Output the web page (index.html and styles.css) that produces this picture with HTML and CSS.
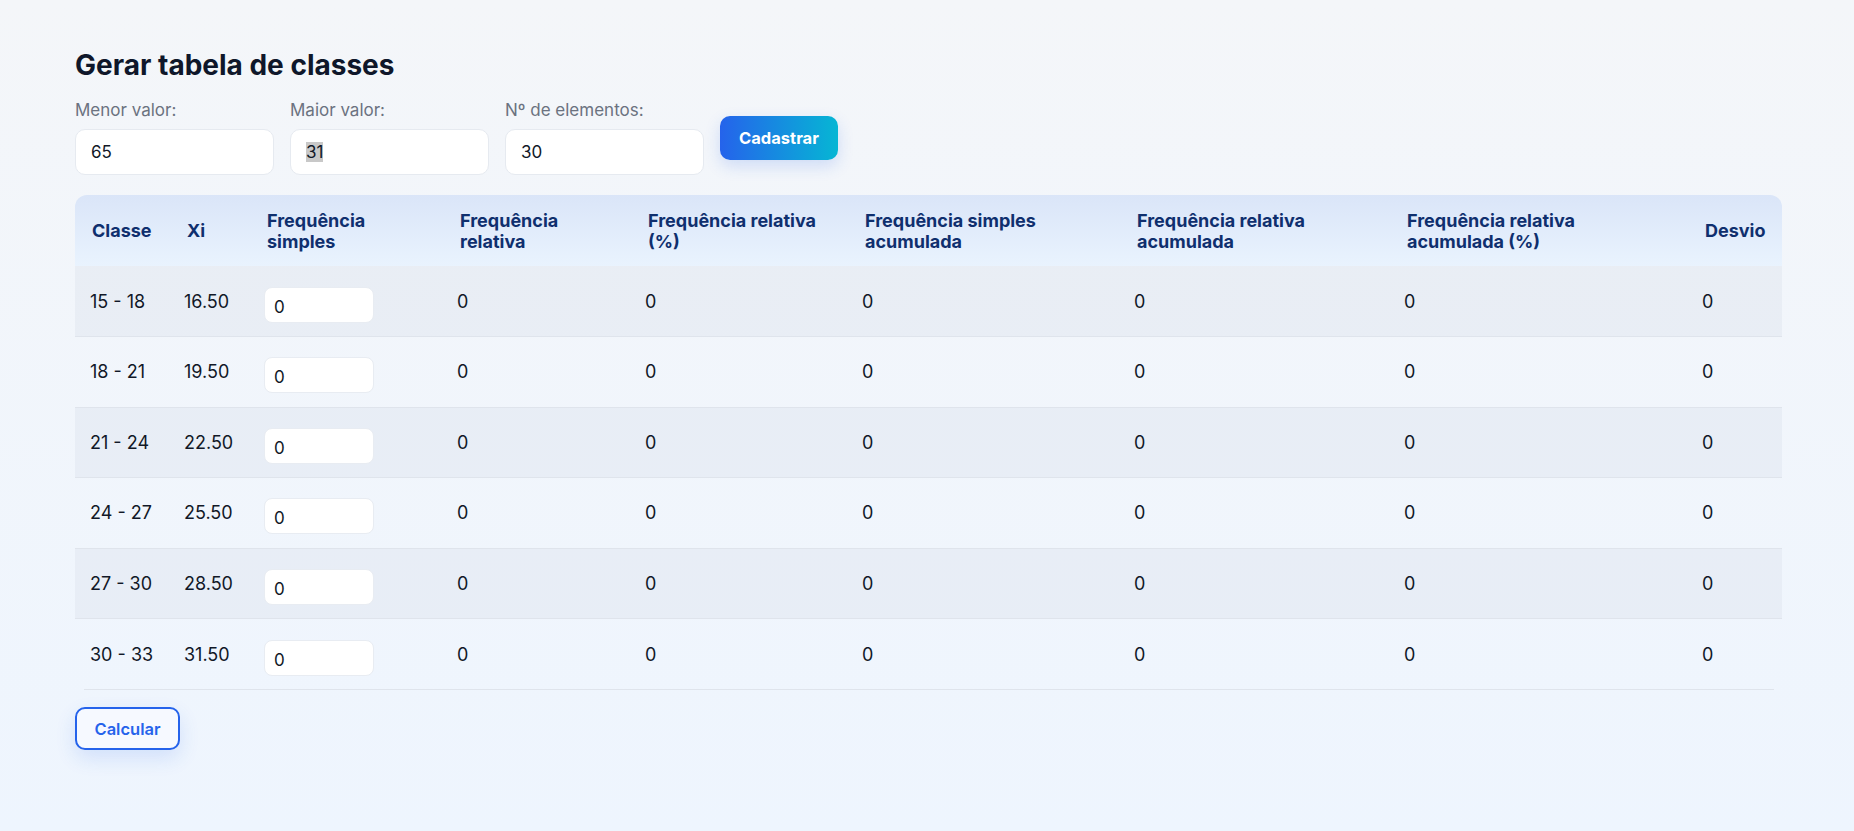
FILE: index.html
```html
<!DOCTYPE html>
<html lang="pt-BR">
<head>
<meta charset="utf-8">
<title>Gerar tabela de classes</title>
<link rel="stylesheet" href="styles.css">
</head>
<body>
<main class="page">
  <h1 class="title">Gerar tabela de classes</h1>
  <form class="form" onsubmit="return false">
    <div class="field">
      <label class="label">Menor valor:</label>
      <input class="input" type="text" value="65">
    </div>
    <div class="field">
      <label class="label">Maior valor:</label>
      <input class="input input-selected" id="maior" type="text" value="31">
    </div>
    <div class="field">
      <label class="label">Nº de elementos:</label>
      <input class="input" type="text" value="30">
    </div>
    <button class="btn-primary" type="button">Cadastrar</button>
  </form>

  <div class="table-wrap">
    <table class="table">
      <colgroup>
        <col class="c1"><col class="c2"><col class="c3"><col class="c4"><col class="c5"><col class="c6"><col class="c7"><col class="c8"><col class="c9">
      </colgroup>
      <thead>
        <tr>
          <th>Classe</th>
          <th>Xi</th>
          <th>Frequência<br>simples</th>
          <th>Frequência<br>relativa</th>
          <th>Frequência relativa<br>(%)</th>
          <th>Frequência simples<br>acumulada</th>
          <th>Frequência relativa<br>acumulada</th>
          <th>Frequência relativa<br>acumulada (%)</th>
          <th>Desvio</th>
        </tr>
      </thead>
      <tbody>
        <tr><td>15 - 18</td><td>16.50</td><td class="td-input"><input class="cell-input" type="text" value="0"></td><td>0</td><td>0</td><td>0</td><td>0</td><td>0</td><td>0</td></tr>
        <tr><td>18 - 21</td><td>19.50</td><td class="td-input"><input class="cell-input" type="text" value="0"></td><td>0</td><td>0</td><td>0</td><td>0</td><td>0</td><td>0</td></tr>
        <tr><td>21 - 24</td><td>22.50</td><td class="td-input"><input class="cell-input" type="text" value="0"></td><td>0</td><td>0</td><td>0</td><td>0</td><td>0</td><td>0</td></tr>
        <tr><td>24 - 27</td><td>25.50</td><td class="td-input"><input class="cell-input" type="text" value="0"></td><td>0</td><td>0</td><td>0</td><td>0</td><td>0</td><td>0</td></tr>
        <tr><td>27 - 30</td><td>28.50</td><td class="td-input"><input class="cell-input" type="text" value="0"></td><td>0</td><td>0</td><td>0</td><td>0</td><td>0</td><td>0</td></tr>
        <tr><td>30 - 33</td><td>31.50</td><td class="td-input"><input class="cell-input" type="text" value="0"></td><td>0</td><td>0</td><td>0</td><td>0</td><td>0</td><td>0</td></tr>
      </tbody>
    </table>
  </div>
  <div class="divider"></div>

  <button class="btn-outline" type="button">Calcular</button>
</main>
<script src="script.js"></script>
</body>
</html>
```

FILE: styles.css
```css
* { box-sizing: border-box; }

html, body {
  margin: 0;
  min-height: 100%;
}

body {
  min-height: 100vh;
  font-family: Inter, "Noto Sans", "Liberation Sans", sans-serif;
  background: linear-gradient(180deg, #f4f6f9 0%, #eef5fe 100%);
  color: #111827;
}

.page {
  padding: 48px 72px 40px 75px;
}

.title {
  margin: 0 0 18px;
  font-size: 28px;
  line-height: 34px;
  font-weight: 700;
  color: #0f172a;
}

.form {
  display: flex;
  align-items: center;
  gap: 16px;
}

.field {
  display: flex;
  flex-direction: column;
  gap: 9px;
  width: 199px;
}

.label {
  font-size: 17px;
  line-height: 20px;
  color: #6b7280;
}

.input {
  height: 46px;
  width: 100%;
  padding: 0 15px;
  border: 1px solid #e6eaf0;
  border-radius: 10px;
  background: #ffffff;
  font-family: inherit;
  font-size: 17px;
  color: #111827;
  outline: none;
}

.input-selected::selection {
  background: #c8c8c8;
  color: #111827;
}

.btn-primary {
  width: 118px;
  height: 44px;
  border: none;
  border-radius: 10px;
  background: linear-gradient(90deg, #2563eb 0%, #06b6d4 100%);
  color: #ffffff;
  font-family: inherit;
  font-size: 16.5px;
  font-weight: 700;
  box-shadow: 0 6px 16px rgba(37, 99, 235, 0.18);
  cursor: pointer;
}

.table-wrap {
  margin-top: 20px;
  border-radius: 12px 12px 0 0;
  overflow: hidden;
}

.table {
  width: 100%;
  border-collapse: collapse;
  table-layout: fixed;
}

.c1 { width: 95px; }
.c2 { width: 80px; }
.c3 { width: 193px; }
.c4 { width: 188px; }
.c5 { width: 217px; }
.c6 { width: 272px; }
.c7 { width: 270px; }
.c8 { width: 298px; }
.c9 { width: 94px; }

.table th {
  height: 71px;
  padding: 0 14px 0 17px;
  text-align: left;
  vertical-align: middle;
  font-size: 18px;
  line-height: 21px;
  font-weight: 700;
  color: #0f2f6e;
  background: linear-gradient(180deg, #dae5f8 0%, #e9f3fe 100%);
}

.table td {
  height: 70.5px;
  padding: 0 14px;
  vertical-align: middle;
  font-size: 18px;
  color: #111827;
  border-bottom: 1px solid #dfe4ec;
}

.table td:first-child {
  padding-left: 15px;
}

.table td.td-input {
  padding-top: 7px;
}

.table tbody tr:nth-child(odd) td {
  background: rgba(214, 222, 234, 0.32);
}

.table tbody tr:last-child td {
  border-bottom: none;
}

.cell-input {
  display: block;
  width: 110px;
  height: 36px;
  padding: 4px 9px 0;
  border: 1px solid #e8ecf2;
  border-radius: 8px;
  background: #ffffff;
  font-family: inherit;
  font-size: 17px;
  color: #111827;
  outline: none;
}

.divider {
  height: 1px;
  margin: 0 8px 0 9px;
  background: #dfe4ec;
}

.btn-outline {
  display: block;
  margin-top: 17px;
  width: 105px;
  height: 43px;
  border: 2px solid #2563eb;
  border-radius: 10px;
  background: #f6f9ff;
  color: #2563eb;
  font-family: inherit;
  font-size: 16.5px;
  font-weight: 600;
  box-shadow: 0 8px 20px rgba(37, 99, 235, 0.14);
  cursor: pointer;
}
```

FILE: script.js
```js
var maior = document.getElementById('maior');
if (maior) {
  maior.focus();
  maior.setSelectionRange(0, maior.value.length);
}
```
